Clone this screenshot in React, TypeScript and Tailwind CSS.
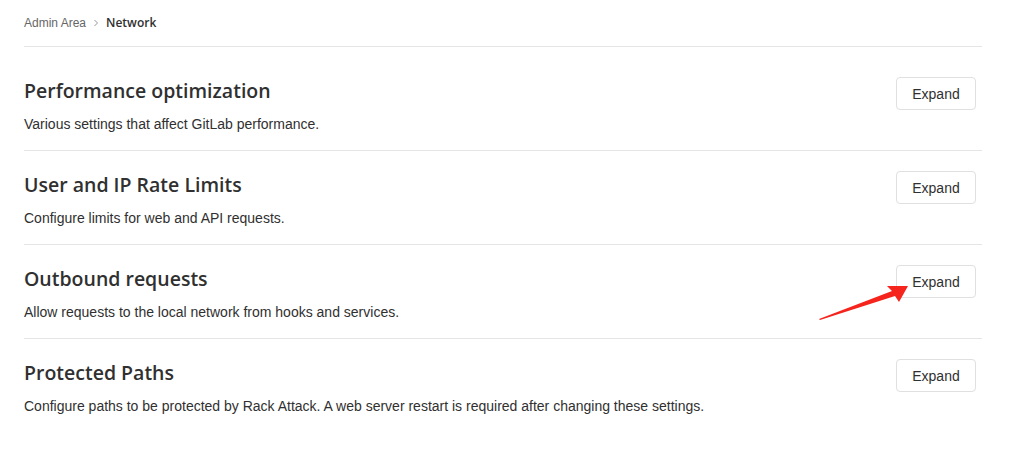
import React from "react";

const sections = [
  { title: "Performance optimization", desc: "Various settings that affect GitLab performance." },
  { title: "User and IP Rate Limits", desc: "Configure limits for web and API requests." },
  { title: "Outbound requests", desc: "Allow requests to the local network from hooks and services." },
  { title: "Protected Paths", desc: "Configure paths to be protected by Rack Attack. A web server restart is required after changing these settings." },
];

export default function App() {
  return (
    <div
      className="relative w-[1026px] h-[461px] bg-white text-[#303030] overflow-hidden"
      style={{ fontFamily: '"Liberation Sans", Arial, sans-serif' }}
    >
      <div className="ml-[24px] w-[958px]">
        <div className="h-[47px] flex items-center border-b border-[#e5e5e5] text-[12px]">
          <span className="text-[#666666]">Admin Area</span>
          <svg width="12" height="12" viewBox="0 0 12 12" className="mx-[4px] text-[#999]">
            <path d="M4.5 3l3 3-3 3" fill="none" stroke="currentColor" strokeWidth="1" />
          </svg>
          <span className="font-semibold text-[#303030] font-['Open_Sans',sans-serif]">Network</span>
        </div>
        {sections.map((s, i) => (
          <div
            key={s.title}
            className={`flex items-start justify-between ${i === 0 ? "pt-[30px]" : "pt-[20px]"} ${i === sections.length - 1 ? "" : "border-b border-[#e5e5e5]"} pb-[16px]`}
          >
            <div>
              <h4 className="text-[19.5px] leading-[28px] font-semibold text-[#303030] font-['Open_Sans',sans-serif]">{s.title}</h4>
              <p className="mt-[9px] text-[14px] leading-[20px] text-[#303030]">{s.desc}</p>
            </div>
            <button className="mr-[6px] w-[80px] h-[33px] pt-[2px] border border-[#e0e0e0] rounded-[4px] bg-white text-[14px] text-[#303030]">
              Expand
            </button>
          </div>
        ))}
      </div>
      <svg className="absolute left-0 top-0 pointer-events-none" width="1026" height="461">
        <polygon points="819,319 892,291 887,286 908,286 899,302 895,296 820,320" fill="#f5241c" />
      </svg>
    </div>
  );
}
